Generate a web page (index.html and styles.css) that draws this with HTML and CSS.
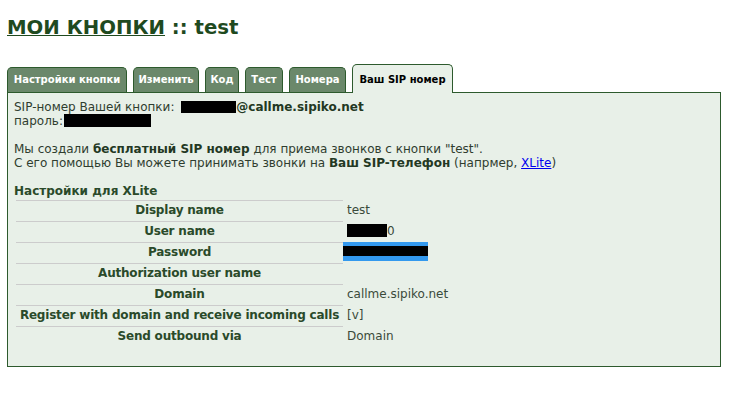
FILE: index.html
```html
<!DOCTYPE html>
<html>
<head>
<meta charset="utf-8">
<link rel="stylesheet" href="styles.css">
</head>
<body>
<h1 class="title"><a class="title-link" href="#">МОИ КНОПКИ</a> :: test</h1>
<div class="tabs">
  <div class="tab t1">Настройки кнопки</div>
  <div class="tab t2">Изменить</div>
  <div class="tab t3">Код</div>
  <div class="tab t4">Тест</div>
  <div class="tab t5">Номера</div>
  <div class="tab active">Ваш SIP номер</div>
</div>
<div class="panel">
  <div class="line">SIP-номер Вашей кнопки: <b><span class="redact r1"></span>@callme.sipiko.net</b></div>
  <div class="line">пароль:<span class="redact r2"></span></div>
  <div class="gap"></div>
  <div class="line">Мы создали <b>бесплатный SIP номер</b> для приема звонков с кнопки "test".</div>
  <div class="line">С его помощью Вы можете принимать звонки на <b>Ваш SIP-телефон</b> (напрмер, <a class="link" href="#">XLite</a>)</div>
  <div class="subhead">Настройки для XLite</div>
  <table class="settings">
    <tr><th>Display name</th><td>test</td></tr>
    <tr><th>User name</th><td><span class="redact r3"></span>0</td></tr>
    <tr><th>Password</th><td><span class="sel"><span class="redact r4"></span></span></td></tr>
    <tr><th>Authorization user name</th><td></td></tr>
    <tr><th>Domain</th><td>callme.sipiko.net</td></tr>
    <tr><th>Register with domain and receive incoming calls</th><td>[v]</td></tr>
    <tr><th>Send outbound via</th><td>Domain</td></tr>
  </table>
</div>
</body>
</html>
```
FILE: styles.css
```css
html, body {
  margin: 0;
  padding: 0;
  background: #ffffff;
}
body {
  padding: 0 25px 0 7px;
  font-family: "DejaVu Sans", Verdana, sans-serif;
  font-size: 12px;
  color: #2f3d2f;
}
.title {
  margin: 15px 0 0 0;
  font-size: 19.7px;
  line-height: 26px;
  font-weight: bold;
  color: #1f4a1f;
}
.title-link {
  color: #1f4a1f;
  text-decoration: underline;
}
.tabs {
  display: flex;
  align-items: flex-end;
  gap: 6px;
  margin-top: 23px;
  position: relative;
  z-index: 1;
  height: 28px;
}
.tab {
  height: 25px;
  padding: 0;
  box-sizing: border-box;
  background: #6b886b;
  border: 1px solid #2d5a2d;
  border-bottom: none;
  border-radius: 5px 5px 0 0;
  color: #ffffff;
  font-size: 10px;
  font-weight: bold;
  line-height: 24px;
  text-align: center;
  white-space: nowrap;
}
.t1 { width: 120px; }
.t2 { width: 66px; }
.t3 { width: 34px; }
.t4 { width: 38px; }
.t5 { width: 57px; }
.tab.active {
  width: 101px;
  height: 29px;
  margin-bottom: -1px;
  background: #e8f0e8;
  color: #000000;
  line-height: 29px;
}
.panel {
  background: #e8f0e8;
  border: 1px solid #2d5a2d;
  height: 275px;
  box-sizing: border-box;
  padding: 7px 6px;
  width: 714px;
}
.line {
  line-height: 14px;
}
.gap {
  height: 14px;
}
b {
  color: #233823;
}
.redact {
  display: inline-block;
  background: #000;
  vertical-align: -2px;
}
.r1 { width: 55px; height: 12px; margin-left: 3px; }
.r2 { width: 87px; height: 13px; margin-left: 1px; }
.r3 { width: 40px; height: 13px; }
.r4 { width: 85px; height: 10px; }
.sel {
  display: inline-block;
  background: #3399ee;
  padding: 1px 0 4px 0;
  margin-left: -4px;
}
.link {
  color: #0000ee;
}
.subhead {
  margin-top: 14px;
  font-weight: bold;
  color: #2a4a2a;
  line-height: 14px;
}
.settings {
  border-collapse: separate;
  border-spacing: 2px;
  margin: 0;
}
.settings th {
  width: 325px;
  height: 18px;
  padding: 0 1px;
  border-top: 1px solid #cccccc;
  text-align: center;
  font-weight: bold;
  color: #2a4a2a;
  letter-spacing: -0.2px;
  white-space: nowrap;
}
.settings td {
  padding: 0 1px 0 2px;
  color: #3a4a3a;
  vertical-align: middle;
}
```
